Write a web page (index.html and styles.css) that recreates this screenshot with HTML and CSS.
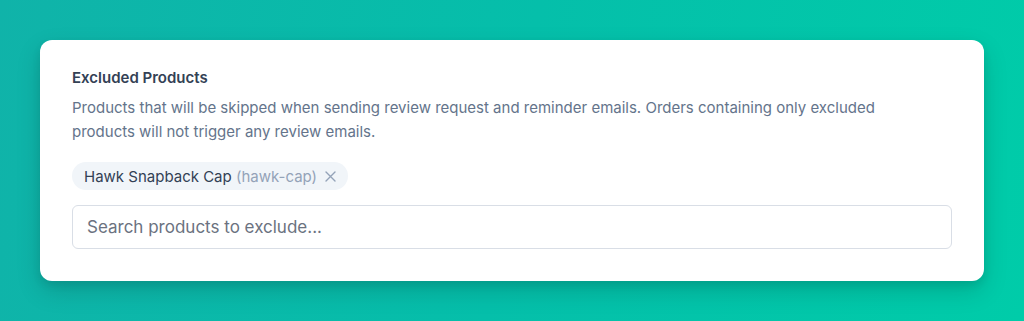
FILE: index.html
```html
<!DOCTYPE html>
<html>
<head>
<meta charset="utf-8">
<link rel="stylesheet" href="styles.css">
</head>
<body>
<div class="card">
  <div class="title">Excluded Products</div>
  <p class="desc">Products that will be skipped when sending review request and reminder emails. Orders containing only excluded products will not trigger any review emails.</p>
  <div class="chips">
    <span class="chip"><span>Hawk Snapback Cap <span class="handle">(hawk-cap)</span></span>
      <svg class="x" width="11" height="11" viewBox="0 0 11 11"><path d="M1 1L10 10M10 1L1 10" stroke="currentColor" stroke-width="1.4" stroke-linecap="round"/></svg>
    </span>
  </div>
  <input class="search" type="text" placeholder="Search products to exclude...">
</div>
</body>
</html>
```
FILE: styles.css
```css
html, body { margin: 0; height: 100%; }
body {
  background: linear-gradient(100deg, #10b3a9 0%, #05bfaa 50%, #00cca9 100%);
  padding: 40px;
  box-sizing: border-box;
  font-family: Inter, "Noto Sans", sans-serif;
}
.card {
  background: #fff;
  border-radius: 12px;
  padding: 27px 32px 32px;
  box-shadow: 0 10px 25px rgba(0,0,0,0.15), 0 4px 8px rgba(0,0,0,0.08);
}
.title {
  font-size: 15px;
  line-height: 22px;
  font-weight: 600;
  color: #334155;
}
.desc {
  margin: 7px 0 0;
  max-width: 820px;
  font-size: 15px;
  line-height: 24px;
  color: #64748b;
}
.chips { margin-top: 18px; display: flex; }
.chip {
  display: inline-flex;
  align-items: center;
  height: 28px;
  padding: 0 12px 0 12px;
  border-radius: 14px;
  background: #f1f5f9;
  font-size: 15px;
  color: #334155;
  gap: 8px;
}
.handle { color: #94a3b8; }
.x { color: #94a3b8; }
.search {
  display: block;
  margin-top: 15px;
  width: 100%;
  box-sizing: border-box;
  height: 44px;
  padding: 0 14px;
  border: 1px solid #d9dee6;
  border-radius: 6px;
  font-family: inherit;
  font-size: 17px;
  color: #334155;
  outline: none;
}
.search::placeholder { color: #6b7280; }
```
